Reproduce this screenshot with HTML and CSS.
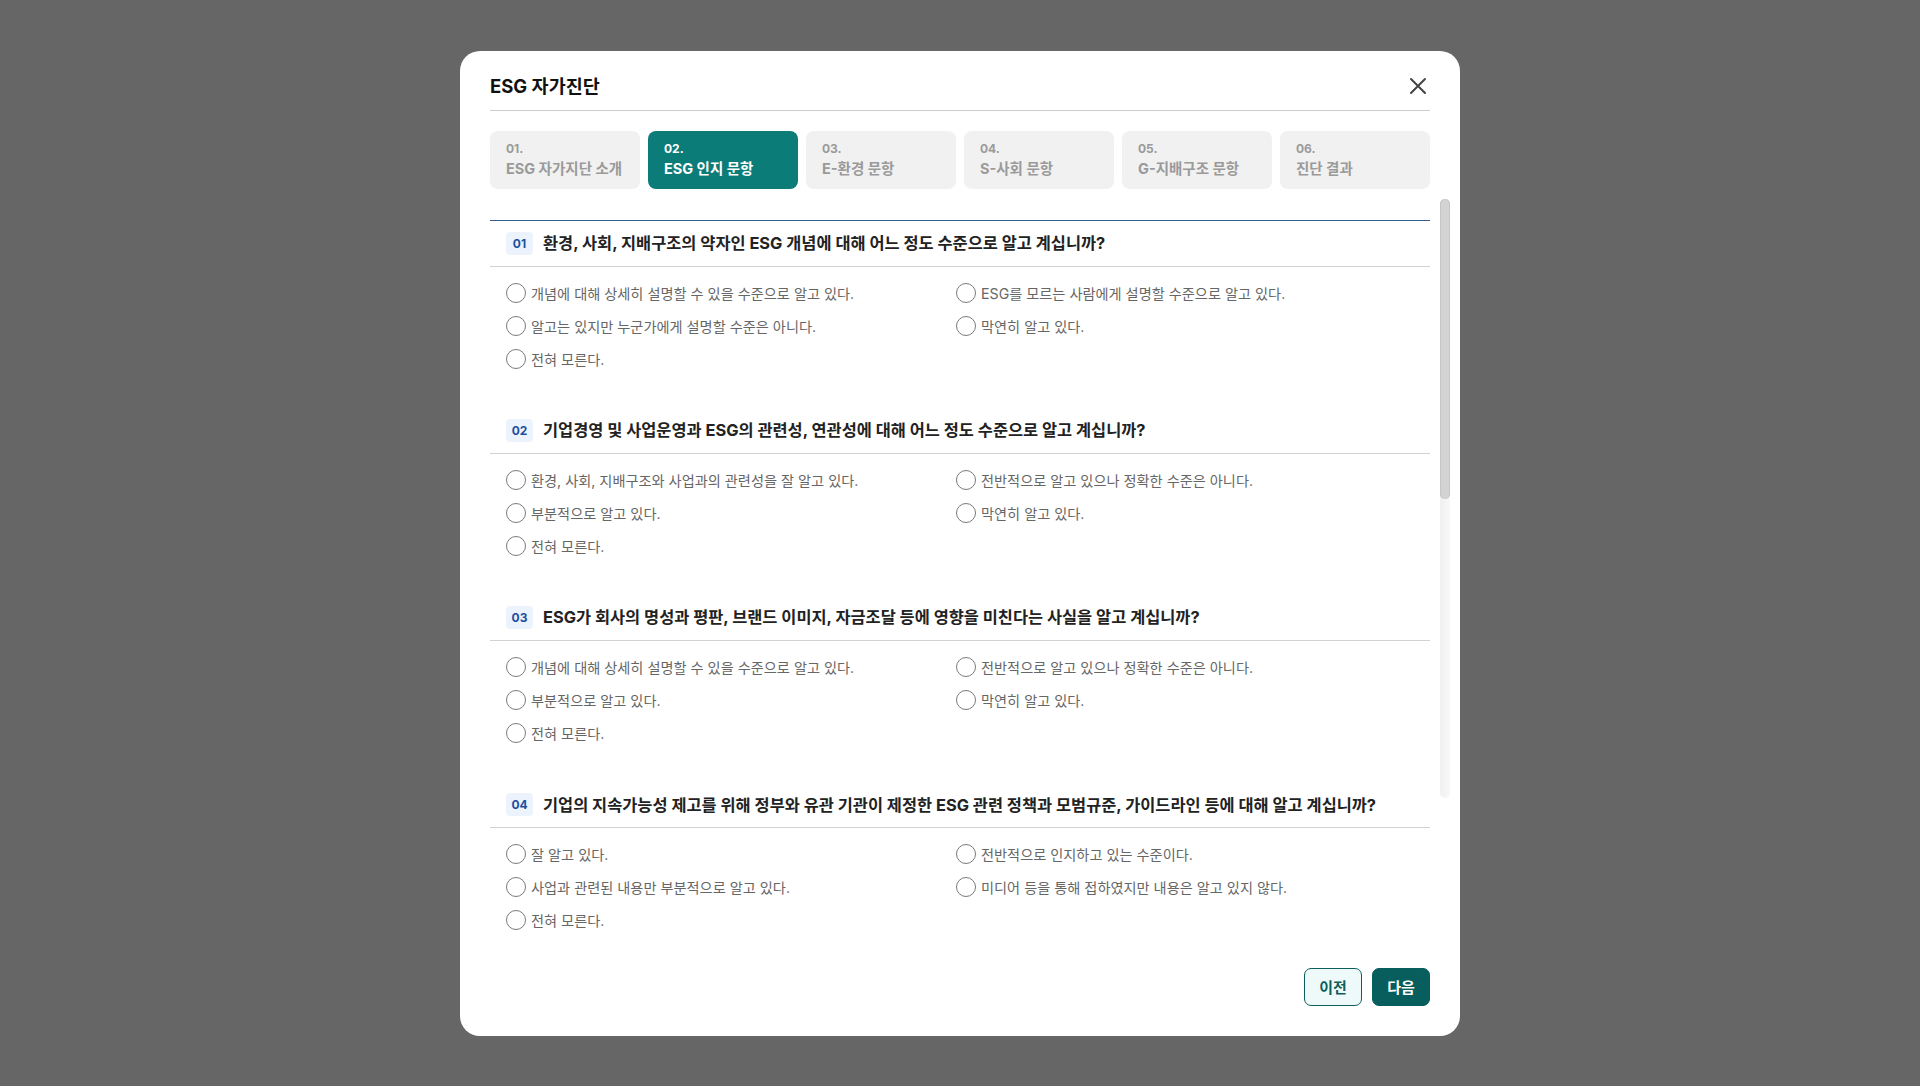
FILE: index.html
```html
<!DOCTYPE html>
<html lang="ko">
<head>
<meta charset="utf-8">
<title>ESG 자가진단</title>
<link rel="stylesheet" href="styles.css">
</head>
<body>
<div class="overlay">
  <div class="modal" role="dialog" aria-label="ESG 자가진단">
    <div class="modal-head">
      <h2 class="modal-title">ESG 자가진단</h2>
      <button class="close" type="button" aria-label="닫기">
        <svg width="24" height="24" viewBox="0 0 24 24"><path d="M5 5L19 19M19 5L5 19" stroke="#444" stroke-width="2" stroke-linecap="round" fill="none"/></svg>
      </button>
    </div>

    <ol class="steps">
      <li class="step"><span class="step-no">01.</span><span class="step-name">ESG 자가지단 소개</span></li>
      <li class="step active"><span class="step-no">02.</span><span class="step-name">ESG 인지 문항</span></li>
      <li class="step"><span class="step-no">03.</span><span class="step-name">E-환경 문항</span></li>
      <li class="step"><span class="step-no">04.</span><span class="step-name">S-사회 문항</span></li>
      <li class="step"><span class="step-no">05.</span><span class="step-name">G-지배구조 문항</span></li>
      <li class="step"><span class="step-no">06.</span><span class="step-name">진단 결과</span></li>
    </ol>

    <div class="modal-body">
      <div class="q-list">
        <section class="question">
          <div class="q-head"><span class="q-no">01</span><h3 class="q-title">환경, 사회, 지배구조의 약자인 ESG 개념에 대해 어느 정도 수준으로 알고 계십니까?</h3></div>
          <div class="q-options">
            <label class="opt"><input type="radio" name="q1"><span>개념에 대해 상세히 설명할 수 있을 수준으로 알고 있다.</span></label>
            <label class="opt"><input type="radio" name="q1"><span>ESG를 모르는 사람에게 설명할 수준으로 알고 있다.</span></label>
            <label class="opt"><input type="radio" name="q1"><span>알고는 있지만 누군가에게 설명할 수준은 아니다.</span></label>
            <label class="opt"><input type="radio" name="q1"><span>막연히 알고 있다.</span></label>
            <label class="opt"><input type="radio" name="q1"><span>전혀 모른다.</span></label>
          </div>
        </section>
        <section class="question">
          <div class="q-head"><span class="q-no">02</span><h3 class="q-title">기업경영 및 사업운영과 ESG의 관련성, 연관성에 대해 어느 정도 수준으로 알고 계십니까?</h3></div>
          <div class="q-options">
            <label class="opt"><input type="radio" name="q2"><span>환경, 사회, 지배구조와 사업과의 관련성을 잘 알고 있다.</span></label>
            <label class="opt"><input type="radio" name="q2"><span>전반적으로 알고 있으나 정확한 수준은 아니다.</span></label>
            <label class="opt"><input type="radio" name="q2"><span>부분적으로 알고 있다.</span></label>
            <label class="opt"><input type="radio" name="q2"><span>막연히 알고 있다.</span></label>
            <label class="opt"><input type="radio" name="q2"><span>전혀 모른다.</span></label>
          </div>
        </section>
        <section class="question">
          <div class="q-head"><span class="q-no">03</span><h3 class="q-title">ESG가 회사의 명성과 평판, 브랜드 이미지, 자금조달 등에 영향을 미친다는 사실을 알고 계십니까?</h3></div>
          <div class="q-options">
            <label class="opt"><input type="radio" name="q3"><span>개념에 대해 상세히 설명할 수 있을 수준으로 알고 있다.</span></label>
            <label class="opt"><input type="radio" name="q3"><span>전반적으로 알고 있으나 정확한 수준은 아니다.</span></label>
            <label class="opt"><input type="radio" name="q3"><span>부분적으로 알고 있다.</span></label>
            <label class="opt"><input type="radio" name="q3"><span>막연히 알고 있다.</span></label>
            <label class="opt"><input type="radio" name="q3"><span>전혀 모른다.</span></label>
          </div>
        </section>
        <section class="question">
          <div class="q-head"><span class="q-no">04</span><h3 class="q-title">기업의 지속가능성 제고를 위해 정부와 유관 기관이 제정한 ESG 관련 정책과 모범규준, 가이드라인 등에 대해 알고 계십니까?</h3></div>
          <div class="q-options">
            <label class="opt"><input type="radio" name="q4"><span>잘 알고 있다.</span></label>
            <label class="opt"><input type="radio" name="q4"><span>전반적으로 인지하고 있는 수준이다.</span></label>
            <label class="opt"><input type="radio" name="q4"><span>사업과 관련된 내용만 부분적으로 알고 있다.</span></label>
            <label class="opt"><input type="radio" name="q4"><span>미디어 등을 통해 접하였지만 내용은 알고 있지 않다.</span></label>
            <label class="opt"><input type="radio" name="q4"><span>전혀 모른다.</span></label>
          </div>
        </section>
      </div>
      <div class="scrollbar"><div class="thumb"></div></div>
    </div>

    <div class="modal-foot">
      <button class="btn btn-prev" type="button">이전</button>
      <button class="btn btn-next" type="button">다음</button>
    </div>
  </div>
</div>
</body>
</html>
```

FILE: styles.css
```css
html, body {
  margin: 0;
  height: 100%;
}

body {
  background: #666666;
  font-family: Inter, "Noto Sans CJK KR", sans-serif;
  color: #222;
}

.overlay {
  height: 100vh;
  display: flex;
  align-items: center;
  justify-content: center;
}

.modal {
  width: 1000px;
  height: 985px;
  box-sizing: border-box;
  background: #fff;
  border-radius: 20px;
  padding: 0 30px 30px;
  display: flex;
  flex-direction: column;
}

.modal-head {
  display: flex;
  align-items: center;
  justify-content: space-between;
  padding: 23px 0 12px;
  border-bottom: 1px solid #cccccc;
}

.modal-title {
  margin: 0;
  font-size: 18.5px;
  line-height: 24px;
  font-weight: 700;
  color: #111;
}

.close {
  width: 24px;
  height: 24px;
  padding: 0;
  border: 0;
  background: none;
  display: flex;
}

.steps {
  display: grid;
  grid-template-columns: repeat(6, 1fr);
  gap: 8px;
  margin: 20px 0 0;
  padding: 0;
  list-style: none;
}

.step {
  height: 58px;
  box-sizing: border-box;
  padding: 10px 16px 0;
  background: #f1f1f1;
  border-radius: 8px;
  color: #9a9a9a;
}

.step-no {
  display: block;
  font-size: 12px;
  line-height: 16px;
  font-weight: 700;
}

.step-name {
  display: block;
  margin-top: 1px;
  font-size: 14.5px;
  line-height: 22px;
  font-weight: 700;
}

.step.active {
  background: #0c7c79;
  color: #fff;
}

.modal-body {
  position: relative;
  flex: none;
  height: 750px;
  margin: 10px -20px 0 0;
  padding-right: 20px;
  overflow: hidden;
}

.q-list {
  margin-top: 21px;
  border-top: 1px solid #2f5e8e;
}

.q-head {
  display: flex;
  align-items: center;
  gap: 10px;
  height: 46px;
  box-sizing: border-box;
  padding: 0 16px;
  border-bottom: 1px solid #d2d2d2;
}

.q-no {
  flex: none;
  width: 27px;
  height: 23px;
  display: flex;
  align-items: center;
  justify-content: center;
  background: #edf3fc;
  border-radius: 4px;
  color: #1c4f9f;
  font-size: 12px;
  font-weight: 700;
}

.q-title {
  margin: 0;
  font-size: 16.4px;
  line-height: 24px;
  font-weight: 700;
  color: #222;
}

.q-options {
  display: grid;
  grid-template-columns: 450px 1fr;
  row-gap: 13px;
  padding: 16px 16px 39.2px;
}

.opt {
  display: flex;
  align-items: center;
  gap: 5px;
  height: 20px;
  font-size: 14.2px;
  color: #666;
  white-space: nowrap;
}

.opt input {
  appearance: none;
  -webkit-appearance: none;
  flex: none;
  margin: 0;
  width: 20px;
  height: 20px;
  box-sizing: border-box;
  border: 1.5px solid #7a7a7a;
  border-radius: 50%;
  background: #fff;
}

.scrollbar {
  position: absolute;
  top: 0;
  right: 0;
  width: 10px;
  height: 599px;
  background: linear-gradient(to right, #f0f0f0, #f8f8f8);
  border-radius: 5px;
}

.thumb {
  height: 300px;
  background: #d3d3d3;
  border-radius: 5px;
  box-shadow: inset 1px 0 #c6c6c6, inset -1px 0 #c6c6c6;
}

.modal-foot {
  margin-top: auto;
  display: flex;
  justify-content: flex-end;
  gap: 10px;
}

.btn {
  width: 58px;
  height: 38px;
  box-sizing: border-box;
  border-radius: 7px;
  font-family: inherit;
  font-size: 15px;
  font-weight: 700;
  padding: 0;
}

.btn-prev {
  background: #eefaf9;
  border: 1px solid #0d5f5d;
  color: #0d5f5d;
}

.btn-next {
  background: #075e5c;
  border: 1px solid #075e5c;
  color: #fff;
}
```
